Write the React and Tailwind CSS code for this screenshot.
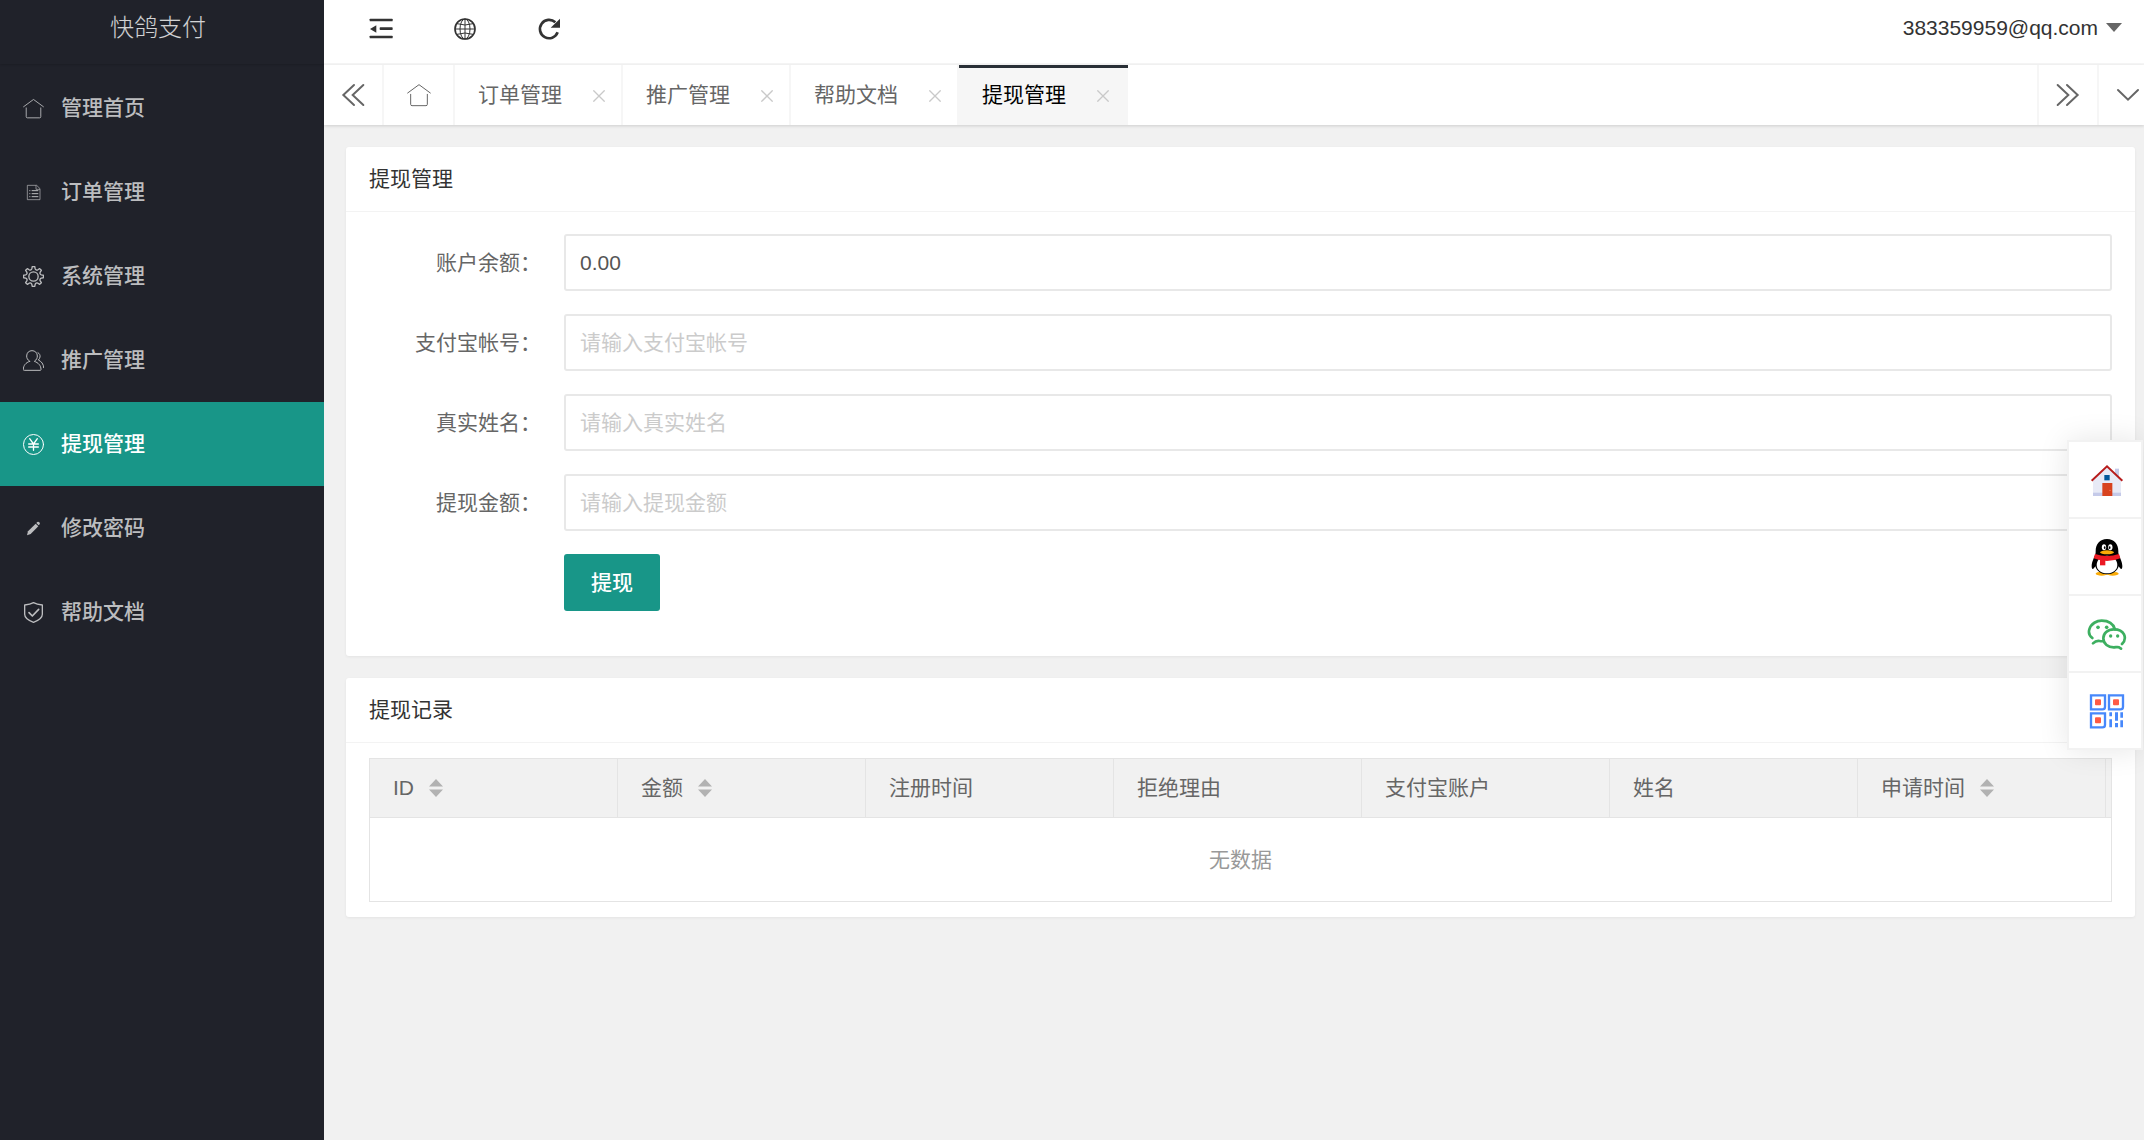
import React from "react";

const FONT = "font-['Liberation_Sans','Noto_Sans_CJK_SC',sans-serif]";

/* ---------- line icons ---------- */

function HomeIcon({ className, strokeWidth = 3 }) {
  return (
    <svg viewBox="0 0 72 72" className={className} fill="none" stroke="currentColor" strokeWidth={strokeWidth} strokeLinecap="round" strokeLinejoin="round">
      <path d="M2 30 36 5 70 30" />
      <path d="M11 34v30q0 4 4 4h42q4 0 4-4V34" />
    </svg>
  );
}

function DocIcon({ className }) {
  return (
    <svg viewBox="0 0 63 63" className={className} fill="none" stroke="currentColor" strokeWidth="2">
      <path d="M13 10h28l10 10v33H13z" />
      <path d="M39 10v12h12" />
      <path d="M19 26h3M26 26h20M19 35h3M26 35h20M19 44h3M26 44h20" strokeWidth="3" />
    </svg>
  );
}

const GEAR_PATH = (() => {
  const pt = (r, deg) => {
    const a = (deg * Math.PI) / 180;
    return `${(31.5 + r * Math.cos(a)).toFixed(1)} ${(31.5 + r * Math.sin(a)).toFixed(1)}`;
  };
  let d = "";
  for (let i = 0; i < 8; i++) {
    const c = i * 45 - 90;
    d += `${i === 0 ? "M" : "L"}${pt(24, c - 12)}L${pt(30, c - 7)}L${pt(30, c + 7)}L${pt(24, c + 12)}Q${pt(19, c + 22.5)} ${pt(24, c + 33)}`;
  }
  return d + "Z";
})();

function GearIcon({ className }) {
  return (
    <svg viewBox="0 0 63 63" className={className} fill="none" stroke="currentColor" strokeWidth="4" strokeLinejoin="round">
      <path d={GEAR_PATH} />
      <circle cx="31.5" cy="31.5" r="14" />
    </svg>
  );
}

function UsersIcon({ className }) {
  return (
    <svg viewBox="0 0 63 63" className={className} fill="none" stroke="currentColor" strokeWidth="3" strokeLinejoin="round" strokeLinecap="round">
      <path d="M20 34C13 29 11 24 11 18 11 8 18 2 27 2s16 6 16 16c0 6-2 11-9 16 12 4 20 13 20 24 0 3-1 3-3 3H4c-2 0-3 0-3-3 0-11 7-20 19-24z" />
      <path d="M45 8c5 3 7 8 6 13-1 4-2 6-5 9 9 4 16 12 16 23" />
    </svg>
  );
}

function YenIcon({ className }) {
  return (
    <svg viewBox="0 0 63 63" className={className} fill="none" stroke="currentColor" strokeWidth="4" strokeLinecap="round">
      <circle cx="31.5" cy="31.5" r="30" strokeWidth="3" />
      <path d="M20 14 31.5 30 43 14M31.5 30v19M17 30h29M17 39h29" />
    </svg>
  );
}

function PencilIcon({ className }) {
  return (
    <svg viewBox="0 0 63 63" className={className} fill="currentColor">
      <path d="M12 52 15 40 38 17 46 25 23 48z" />
      <path d="M40 15l3-3q3-2 6 1t1 6l-3 3z" />
    </svg>
  );
}

function ShieldIcon({ className }) {
  return (
    <svg viewBox="0 0 63 63" className={className} fill="none" stroke="currentColor" strokeWidth="4" strokeLinejoin="round" strokeLinecap="round">
      <path d="M31.5 2C24 6 14 8 5 9v28c0 12 15 20 26.5 24C43 57 58 49 58 37V9C49 8 39 6 31.5 2z" />
      <path d="M18 32 28 42 47 22" strokeWidth="5" />
    </svg>
  );
}

function FoldIcon() {
  return (
    <svg viewBox="0 0 72 72" className="size-6" fill="currentColor">
      <rect x="2" y="5" width="69" height="8" rx="2" />
      <rect x="32" y="31" width="39" height="8" rx="2" />
      <rect x="2" y="56" width="69" height="8" rx="2" />
      <path d="M3 36 22 25v22z" />
    </svg>
  );
}

function GlobeIcon() {
  return (
    <svg viewBox="0 0 72 72" className="size-6" fill="none" stroke="currentColor" strokeWidth="3">
      <circle cx="36" cy="36" r="30" strokeWidth="5" />
      <ellipse cx="36" cy="36" rx="15" ry="30" />
      <path d="M36 6v60M6 36h60M12 20q24 8 48 0M12 52q24-8 48 0" />
    </svg>
  );
}

function RefreshIcon() {
  return (
    <svg viewBox="0 0 72 72" className="size-6" fill="none">
      <path d="M62 46A27.5 27.5 0 1 1 55 16" stroke="currentColor" strokeWidth="8" />
      <path d="M69 5v27H41z" fill="currentColor" />
    </svg>
  );
}

function DoubleChevron({ right }) {
  return (
    <svg viewBox="0 0 72 72" className="size-6" fill="none" stroke="currentColor" strokeWidth="6" strokeLinecap="round">
      {right ? <path d="M5 6 37 36 5 66M33 6 65 36 33 66" /> : <path d="M39 6 7 36 39 66M67 6 35 36 67 66" />}
    </svg>
  );
}

function ChevronDown() {
  return (
    <svg viewBox="0 0 72 72" className="size-6" fill="none" stroke="currentColor" strokeWidth="6" strokeLinecap="round">
      <path d="M6 21 36 50 66 21" />
    </svg>
  );
}

function CloseIcon() {
  return (
    <svg viewBox="0 0 36 36" className="size-3" fill="none" stroke="currentColor" strokeWidth="4">
      <path d="M1 1 35 35M35 1 1 35" />
    </svg>
  );
}

function SortIcon() {
  return (
    <svg viewBox="0 0 14 18" className="h-[18px] w-[14px]" fill="#b2b2b2">
      <path d="M7 0l7 7.5H0zM7 18l7-7.5H0z" />
    </svg>
  );
}

/* ---------- colour icons of the side dock ---------- */

function HouseColor() {
  return (
    <svg viewBox="0 0 120 120" className="size-10">
      <rect x="84" y="26" width="12" height="30" fill="#c5cae9" />
      <path d="M18 108V60L60 20l42 40v48z" fill="#e8eaf6" />
      <path d="M18 98h84v10H18z" fill="#c5cae9" />
      <rect x="52" y="45" width="16" height="16" fill="#01579b" />
      <rect x="46" y="69" width="30" height="39" fill="#d8431f" />
      <circle cx="69" cy="91" r="1.5" fill="#ffab91" />
      <path d="M14 62 60 19l46 43" fill="none" stroke="#b71c1c" strokeWidth="6" />
    </svg>
  );
}

function PenguinColor() {
  return (
    <svg viewBox="0 0 120 120" className="size-10">
      <ellipse cx="44" cy="110" rx="18" ry="6" fill="#faab07" />
      <ellipse cx="77" cy="110" rx="18" ry="6" fill="#faab07" />
      <path d="M60 6C38 6 26 22 26 42c0 4 0 7-1 10-3 9-11 23-11 35 0 5 1 9 3 9s5-3 8-8c4 14 17 24 35 24s31-10 35-24c3 5 6 8 8 8s3-4 3-9c0-12-8-26-11-35-1-3-1-6-1-10C94 22 82 6 60 6z" fill="#000" />
      <path d="M60 56c18 0 31 12 31 28 0 15-13 25-31 25S29 99 29 84c0-16 13-28 31-28z" fill="#fff" />
      <ellipse cx="51" cy="31" rx="6.5" ry="9" fill="#fff" />
      <ellipse cx="70" cy="31" rx="6.5" ry="9" fill="#fff" />
      <ellipse cx="53" cy="32" rx="2.5" ry="4" fill="#000" />
      <ellipse cx="68" cy="32" rx="2.5" ry="4" fill="#000" />
      <ellipse cx="60" cy="46" rx="21" ry="6" fill="#faab07" />
      <path d="M24 51q36 12 72 0l4 13q-40 16-80 0z" fill="#eb1923" />
      <path d="M39 66h16v19H39z" fill="#eb1923" />
    </svg>
  );
}

function WechatColor() {
  return (
    <svg viewBox="0 0 120 120" className="size-10" fill="none" stroke="#3daf60" strokeWidth="8" strokeLinecap="round" strokeLinejoin="round">
      <path d="M16 72C7 65 4 56 7 46 12 28 30 20 44 20c20 0 35 10 40 26" />
      <path d="M18 88c6-6 14-8 20-7 5 1 8 1 12 0" />
      <path d="M105 90c8-8 11-18 6-29-5-10-18-15-30-15-20 0-32 13-32 27 0 17 15 27 31 27 7 0 11-2 16 0l6 4" />
      <g fill="#3daf60" stroke="none">
        <circle cx="33" cy="40" r="5.5" />
        <circle cx="59" cy="40" r="5.5" />
        <circle cx="71" cy="66" r="5" />
        <circle cx="92" cy="66" r="5" />
      </g>
    </svg>
  );
}

function QrColor() {
  return (
    <svg viewBox="0 0 120 120" className="size-10">
      <g fill="none" stroke="#4788fb" strokeWidth="7">
        <path d="M12 13h42v34q0 8-8 8H12z" />
        <path d="M66 13h42v34q0 8-8 8H66z" />
        <path d="M12 67h42v34q0 8-8 8H12z" />
      </g>
      <g fill="#ff5b45">
        <rect x="24" y="25" width="18" height="18" rx="3" />
        <rect x="78" y="25" width="18" height="18" rx="3" />
        <rect x="24" y="79" width="18" height="18" rx="3" />
      </g>
      <path d="M67 64h8v12h-8zM67 85h8v24h-8zM84 64h9v25h-9zM84 96h9v13h-9zM100 64h8v16h-8zM100 88h8v21h-8z" fill="#4788fb" />
    </svg>
  );
}

/* ---------- data ---------- */

const NAV = [
  { label: "管理首页", Icon: HomeIcon },
  { label: "订单管理", Icon: DocIcon },
  { label: "系统管理", Icon: GearIcon },
  { label: "推广管理", Icon: UsersIcon },
  { label: "提现管理", Icon: YenIcon, active: true },
  { label: "修改密码", Icon: PencilIcon },
  { label: "帮助文档", Icon: ShieldIcon },
];

const TABS = [
  { label: "订单管理" },
  { label: "推广管理" },
  { label: "帮助文档" },
  { label: "提现管理", active: true },
];

const FIELDS = [
  { id: "balance", label: "账户余额：", value: "0.00" },
  { id: "alipay", label: "支付宝帐号：", placeholder: "请输入支付宝帐号" },
  { id: "realname", label: "真实姓名：", placeholder: "请输入真实姓名" },
  { id: "amount", label: "提现金额：", placeholder: "请输入提现金额" },
];

const COLUMNS = [
  { label: "ID", sort: true },
  { label: "金额", sort: true },
  { label: "注册时间" },
  { label: "拒绝理由" },
  { label: "支付宝账户" },
  { label: "姓名" },
  { label: "申请时间", sort: true },
];

const DOCK = [
  { label: "首页", Icon: HouseColor },
  { label: "QQ", Icon: PenguinColor },
  { label: "微信", Icon: WechatColor },
  { label: "二维码", Icon: QrColor },
];

/* ---------- page parts ---------- */

function Sidebar() {
  return (
    <aside className="w-[324px] shrink-0 bg-[#20222a]">
      <div className="flex h-16 justify-center pr-2 text-2xl leading-[56px] font-light text-white/80 shadow-[0_1px_2px_0_rgba(0,0,0,0.15)]">
        快鸽支付
      </div>
      <nav className="pt-0.5">
        {NAV.map(({ label, Icon, active }) => (
          <a
            key={label}
            href="#"
            className={
              active
                ? "flex h-[84px] items-center bg-[#189688] pl-[23px] font-medium text-white"
                : "flex h-[84px] items-center pl-[23px] font-medium text-[#bcbdbf]"
            }
          >
            <Icon className="size-[21px]" />
            <span className="ml-[17px]">{label}</span>
          </a>
        ))}
      </nav>
    </aside>
  );
}

function TopBar() {
  return (
    <header className="flex h-[65px] items-center justify-between border-b-2 border-[#f6f6f6] bg-white pb-1.5 text-[#333]">
      <div className="flex pl-[15px]">
        <button type="button" aria-label="收起菜单" className="flex w-[84px] justify-center"><FoldIcon /></button>
        <button type="button" aria-label="前台" className="flex w-[84px] justify-center"><GlobeIcon /></button>
        <button type="button" aria-label="刷新" className="flex w-[84px] justify-center"><RefreshIcon /></button>
      </div>
      <button type="button" className="mr-[22px] flex items-center gap-2 pb-0.5">
        383359959@qq.com
        <svg viewBox="0 0 16 9" className="h-[9px] w-4" fill="#666"><path d="M0 0h16L8 9z" /></svg>
      </button>
    </header>
  );
}

function TabBar() {
  return (
    <div className="relative flex h-[60px] bg-white text-[#666] shadow-[0_1px_3px_0_rgba(0,0,0,0.15)]">
      <button type="button" aria-label="向左滚动" className="flex w-[60px] items-center justify-center border-r-2 border-[#f6f6f6]"><DoubleChevron /></button>
      <a href="#" aria-label="首页" className="flex w-[71px] items-center justify-center border-r-2 border-[#f6f6f6]">
        <HomeIcon className="size-6" />
      </a>
      {TABS.map(({ label, active }) => (
        <div
          key={label}
          className={
            active
              ? "flex w-[169px] items-center justify-between border-t-3 border-[#292f36] bg-[#f6f6f6] pr-[19px] pb-[3px] pl-[23px] text-black"
              : "flex w-[168px] items-center justify-between border-r-2 border-[#f6f6f6] pr-4 pl-[23px]"
          }
        >
          <a href="#">{label}</a>
          <button type="button" aria-label={"关闭" + label} className="mt-0.5 text-[#c9c9c9]"><CloseIcon /></button>
        </div>
      ))}
      <div className="flex-1" />
      <button type="button" aria-label="向右滚动" className="flex w-[60px] items-center justify-center border-l-2 border-[#f6f6f6]"><DoubleChevron right /></button>
      <button type="button" aria-label="更多" className="flex w-[47px] items-center border-l-2 border-[#f6f6f6] pl-[17px]"><ChevronDown /></button>
    </div>
  );
}

function Card({ title, children }) {
  return (
    <section className="rounded-[3px] bg-white shadow-[0_1px_3px_0_rgba(0,0,0,0.06)]">
      <h2 className="flex h-[65px] items-center border-b border-[#f3f3f3] px-[23px] text-[#333]">{title}</h2>
      {children}
    </section>
  );
}

function WithdrawForm() {
  return (
    <form className="flex flex-col gap-[23px] px-[23px] pt-[22px] pb-[45px]" onSubmit={(e) => e.preventDefault()}>
      {FIELDS.map((f) => (
        <div key={f.id} className="flex items-center">
          <label htmlFor={f.id} className="w-[195px] shrink-0 pr-[23px] text-right text-[#666]">{f.label}</label>
          <input
            id={f.id}
            type="text"
            defaultValue={f.value}
            placeholder={f.placeholder}
            className="h-[57px] min-w-0 flex-1 rounded-[3px] border-2 border-[#e8e8e8] bg-white pl-[14px] text-[#555] outline-none placeholder:text-[#cbcbcb]"
          />
        </div>
      ))}
      <div className="pl-[195px]">
        <button type="submit" className="h-[57px] rounded-[3px] bg-[#189688] px-[27px] font-medium text-white">提现</button>
      </div>
    </form>
  );
}

function RecordTable() {
  return (
    <div className="px-[23px] pt-[15px] pb-[15px]">
      <table className="w-full table-fixed border-collapse border border-[#e4e4e4] text-[#666]">
        <colgroup>
          {COLUMNS.map((c) => <col key={c.label} />)}
          <col className="w-[6px]" />
        </colgroup>
        <thead>
          <tr className="h-[59px] bg-[#f1f1f1]">
            {COLUMNS.map((c) => (
              <th key={c.label} scope="col" className="border border-[#e4e4e4] p-0 pl-[23px] text-left font-normal">
                <span className="flex items-center gap-[15px]">
                  {c.label}
                  {c.sort && <SortIcon />}
                </span>
              </th>
            ))}
            <td className="border border-[#e4e4e4] p-0" />
          </tr>
        </thead>
        <tbody>
          <tr className="h-[84px]">
            <td colSpan={8} className="p-0 text-center text-[#999]">无数据</td>
          </tr>
        </tbody>
      </table>
    </div>
  );
}

function Dock() {
  return (
    <div className="fixed top-[440px] right-px flex w-[76px] flex-col divide-y-2 divide-[#f2f2f2] border-2 border-[#f2f2f2] bg-white shadow-[0_0_30px_0_rgba(0,0,0,0.1)]">
      {DOCK.map(({ label, Icon }) => (
        <a key={label} href="#" aria-label={label} className="flex h-[77px] items-center justify-center pl-1 last:h-[75px]">
          <Icon />
        </a>
      ))}
    </div>
  );
}

export default function App() {
  return (
    <div className={`${FONT} flex min-h-screen bg-[#f1f1f1] text-[21px] leading-[30px]`}>
      <Sidebar />
      <div className="flex min-w-0 flex-1 flex-col">
        <TopBar />
        <TabBar />
        <main className="flex flex-col gap-[22px] pt-[22px] pr-[9px] pb-[22px] pl-[22px]">
          <Card title="提现管理"><WithdrawForm /></Card>
          <Card title="提现记录"><RecordTable /></Card>
        </main>
      </div>
      <Dock />
    </div>
  );
}
